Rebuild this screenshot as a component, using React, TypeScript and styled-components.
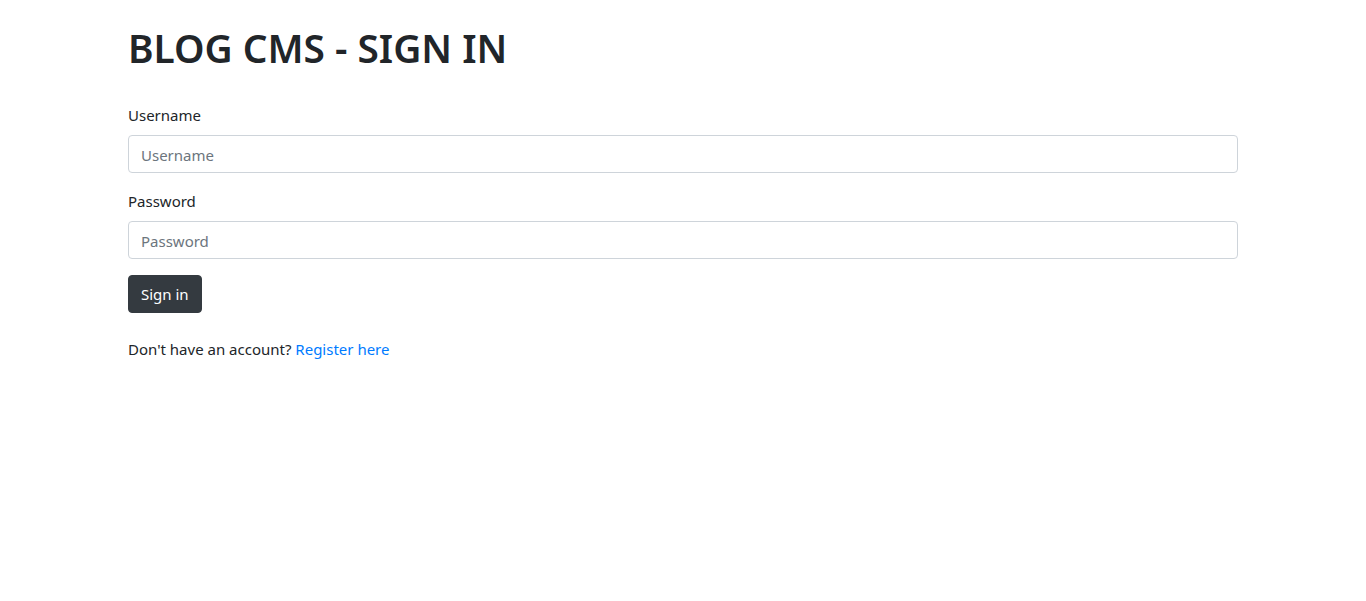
import React from "react";
import styled, { createGlobalStyle } from "styled-components";

const Global = createGlobalStyle`
  html, body { margin: 0; padding: 0; background: #fff; }
  body {
    font-family: "Noto Sans", "Open Sans", sans-serif;
    font-size: 15px;
    line-height: 24px;
    color: #212529;
  }
  * { box-sizing: border-box; }
`;

const Container = styled.main`
  width: 1140px;
  margin: 0 auto;
  padding: 24px 15px 0;
`;

const Title = styled.h1`
  margin: 0 0 31px;
  font-size: 38.8px;
  line-height: 48px;
  font-weight: 600;
  letter-spacing: 0;
`;

const Form = styled.form`
  display: flex;
  flex-direction: column;
`;

const Group = styled.div`
  display: flex;
  flex-direction: column;
  margin-bottom: 16px;
`;

const Label = styled.label`
  display: block;
  line-height: 24px;
  margin-bottom: 8px;
`;

const Input = styled.input`
  display: block;
  width: 100%;
  height: 38px;
  padding: 6px 12px 5px;
  font: inherit;
  font-size: 15px;
  line-height: 24px;
  color: #495057;
  background: #fff;
  border: 1px solid #ced4da;
  border-radius: 4px;
  outline: none;
  &::placeholder { color: #6c757d; opacity: 1; }
`;

const Button = styled.button`
  align-self: flex-start;
  height: 38px;
  padding: 6px 12px;
  font: inherit;
  font-size: 15px;
  line-height: 24px;
  color: #fff;
  background: #343a40;
  border: 1px solid #343a40;
  border-radius: 4px;
  cursor: pointer;
`;

const Note = styled.p`
  margin: 24px 0 0;
  line-height: 24px;
`;

const Link = styled.a`
  color: #007bff;
  text-decoration: none;
`;

export default function App() {
  return (
    <>
      <Global />
      <Container>
        <Title>BLOG CMS - SIGN IN</Title>
        <Form onSubmit={(e) => e.preventDefault()}>
          <Group>
            <Label htmlFor="username">Username</Label>
            <Input id="username" type="text" placeholder="Username" />
          </Group>
          <Group>
            <Label htmlFor="password">Password</Label>
            <Input id="password" type="password" placeholder="Password" />
          </Group>
          <Button type="submit">Sign in</Button>
        </Form>
        <Note>
          Don't have an account? <Link href="#">Register here</Link>
        </Note>
      </Container>
    </>
  );
}
